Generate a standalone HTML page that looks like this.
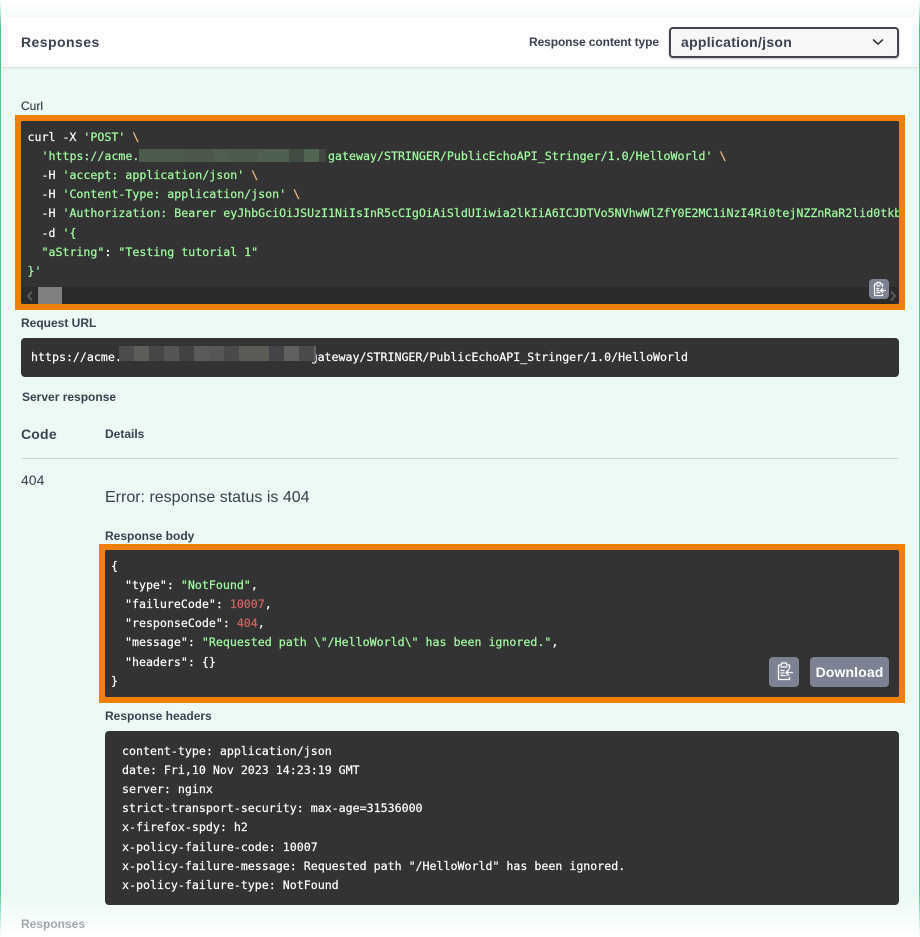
<!DOCTYPE html>
<html><head><meta charset="utf-8">
<style>
html,body{margin:0;padding:0}
body{width:920px;height:937px;overflow:hidden;position:relative;background:#ebfaf4;font-family:"Liberation Sans",sans-serif;color:#3b4151}
.a{position:absolute;white-space:pre}
.box{position:absolute;background:#333}
pre{position:absolute;margin:0;font:11.62px/19.2px "DejaVu Sans Mono",monospace;color:#fff;white-space:pre;font-weight:400;-webkit-text-stroke:.2px currentColor}
.s{color:#a2fca2}.b{color:#fcc28c}.n{color:#d36363}
.lab{font-size:12px;font-weight:700;line-height:14px}
.bl{position:absolute;height:100%;top:0}
.btn{position:absolute;background:#7d8293;border-radius:4px}
</style></head><body>
<div class="a" style="left:0;top:0;width:920px;height:17px;background:linear-gradient(#fff,#f5fcf9)"></div>
<div class="a" style="left:0;top:895px;width:920px;height:42px;background:linear-gradient(rgba(255,255,255,0),#fff)"></div>
<div class="a" style="left:0;top:0;width:1.3px;height:937px;background:linear-gradient(#fff 0,#49cc90 30px,#49cc90 890px,#fff 937px)"></div>
<div class="a" style="left:919px;top:0;width:1px;height:937px;background:linear-gradient(#fff 0,#49cc90 30px,#49cc90 890px,#fff 937px)"></div>
<div class="a" style="left:1px;top:17px;width:918px;height:50px;background:#fff;box-shadow:0 1px 2px rgba(0,0,0,.12)"></div>
<div class="a" style="left:21px;top:34px;font-size:14px;font-weight:700;line-height:16px;letter-spacing:.45px">Responses</div>
<div class="a lab" style="left:529px;top:35px;letter-spacing:-.1px">Response content type</div>
<div class="a" style="left:669px;top:27px;width:226px;height:27px;border:2px solid #41444e;border-radius:4px;background:#f7f7f7;box-shadow:0 1px 2px rgba(0,0,0,.25)"></div>
<div class="a" style="left:681px;top:34px;font-size:14px;font-weight:700;line-height:16px;letter-spacing:.28px">application/json</div>
<svg class="a" style="left:870px;top:36px" width="16" height="12" viewBox="0 0 16 12"><path d="M3 3.500 8 8l5-4.500" fill="none" stroke="#222" stroke-width="1.500"/></svg>

<div class="a lab" style="left:21px;top:99px;font-weight:400;text-shadow:0 0 .4px #3b4151">Curl</div>
<div class="a" style="left:15px;top:115px;width:890px;height:195px;background:#f08000"></div>
<div class="box" style="left:21px;top:121px;width:878px;height:183px;overflow:hidden;border-radius:2px">
<pre style="left:6.500px;top:6.600px">curl -X <span class="s">'POST'</span> <span class="b">\</span>
  <span class="s">'https://acme.                          'gateway/STRINGER/PublicEchoAPI_Stringer/1.0/HelloWorld'</span> <span class="b">\</span>
  -H <span class="s">'accept: application/json'</span> <span class="b">\</span>
  -H <span class="s">'Content-Type: application/json'</span> <span class="b">\</span>
  -H <span class="s">'Authorization: Bearer eyJhbGciOiJSUzI1NiIsInR5cCIgOiAiSldUIiwia2lkIiA6ICJDTVo5NVhwWlZfY0E2MC1iNzI4Ri0tejNZZnRaR2lid0tkb</span>
  -d <span class="s">'{</span>
  <span class="s">"aString"</span>: <span class="s">"Testing tutorial 1"</span>
<span class="s">}'</span></pre>
<div style="position:absolute;left:0;top:166px;width:878px;height:17px;background:#2b2b2b"></div>
<div style="position:absolute;left:17px;top:166px;width:24px;height:17px;background:#808080"></div>
<svg style="position:absolute;left:3px;top:169px" width="12" height="12" viewBox="0 0 12 12"><path d="M8 1.500 4 6l4 4.500" fill="none" stroke="#5a5a5a" stroke-width="2"/></svg>
<svg style="position:absolute;left:866px;top:169px" width="12" height="12" viewBox="0 0 12 12"><path d="M4 1.500 8 6l-4 4.500" fill="none" stroke="#5a5a5a" stroke-width="2"/></svg>
</div>
<div class="a" style="left:139px;top:149px;width:187px;height:13px;background:#4c5b4b">
<div class="bl" style="left:45px;width:45px;background:#4a574a"></div><div class="bl" style="left:75px;width:15px;background:#4f5e4e"></div><div class="bl" style="left:120px;width:30px;background:#4e604f"></div><div class="bl" style="left:150px;width:15px;background:#434c43"></div><div class="bl" style="left:165px;width:15px;background:#506552"></div><div class="bl" style="left:180px;width:7px;background:#404640"></div>
</div>
<div class="btn" style="left:869px;top:279px;width:20px;height:20px"><svg width="20" height="20" viewBox="0 0 20 20" style="display:block"><path d="M5.500 5h2.300V3.500h3.400V5h2.300v3M13.500 15v1.500h-8V5M7.500 6.800h4M7.300 9.500h3M7.300 11.500h3M7.300 13.500h4M17 11.500h-5.500M14 9l-2.500 2.500L14 14" fill="none" stroke="#fff" stroke-width="1.200"/></svg></div>

<div class="a lab" style="left:21px;top:316px">Request URL</div>
<div class="box" style="left:21px;top:338px;width:878px;height:39px;border-radius:4px">
<pre style="left:10px;top:9.500px">https://acme.                           gateway/STRINGER/PublicEchoAPI_Stringer/1.0/HelloWorld</pre>
</div>
<div class="a" style="left:119px;top:346px;width:197px;height:15px;background:#4b4d4f">
<div class="bl" style="left:15px;width:15px;background:#5e5d59"></div><div class="bl" style="left:30px;width:15px;background:#464646"></div><div class="bl" style="left:45px;width:15px;background:#555"></div><div class="bl" style="left:60px;width:15px;background:#424242"></div><div class="bl" style="left:75px;width:15px;background:#5b5a58"></div><div class="bl" style="left:90px;width:15px;background:#565656"></div><div class="bl" style="left:105px;width:15px;background:#48494b"></div><div class="bl" style="left:120px;width:30px;background:#5c5b55"></div><div class="bl" style="left:150px;width:15px;background:#444548"></div><div class="bl" style="left:165px;width:15px;background:#5f605f"></div><div class="bl" style="left:180px;width:15px;background:#4b4b4b"></div><div class="bl" style="left:195px;width:2px;background:#60636b"></div>
</div>
<div class="a lab" style="left:22px;top:390px">Server response</div>
<div class="a" style="left:21px;top:426px;font-size:14px;font-weight:700;line-height:16px;letter-spacing:.2px">Code</div>
<div class="a lab" style="left:105px;top:427px">Details</div>
<div class="a" style="left:21px;top:458px;width:878px;height:1px;background:#c9d4cf"></div>
<div class="a" style="left:21px;top:472px;font-size:14px;line-height:16px">404</div>
<div class="a" style="left:105px;top:488px;font-size:16px;line-height:19px">Error: response status is 404</div>
<div class="a lab" style="left:105px;top:529px">Response body</div>
<div class="a" style="left:99px;top:544px;width:806px;height:159px;background:#f08000"></div>
<div class="box" style="left:105px;top:550px;width:794px;height:147px;border-radius:2px">
<pre style="left:6px;top:6.600px">{
  "type": <span class="s">"NotFound"</span>,
  "failureCode": <span class="n">10007</span>,
  "responseCode": <span class="n">404</span>,
  "message": <span class="s">"Requested path \"/HelloWorld\" has been ignored."</span>,
  "headers": {}
}</pre>
</div>
<div class="btn" style="left:769px;top:657px;width:30px;height:30px"><svg width="30" height="30" viewBox="0 0 30 30" style="display:block"><path d="M9.500 8h3V6h5v2h3v4M20.500 20v2.500h-11V8M11.500 10h7M11.500 13.500h4M11.500 16h4M11.500 18.500h6M24 15.500h-7M20 12.500l-3 3 3 3" fill="none" stroke="#fff" stroke-width="1.300"/></svg></div>
<div class="btn" style="left:810px;top:657px;width:79px;height:30px;color:#fff;font-size:14px;font-weight:700;line-height:30px;text-align:center;letter-spacing:.12px">Download</div>
<div class="a lab" style="left:105px;top:709px">Response headers</div>
<div class="box" style="left:105px;top:731px;width:794px;height:174px;border-radius:4px">
<pre style="left:17px;top:10.500px">content-type: application/json
date: Fri,10 Nov 2023 14:23:19 GMT
server: nginx
strict-transport-security: max-age=31536000
x-firefox-spdy: h2
x-policy-failure-code: 10007
x-policy-failure-message: Requested path "/HelloWorld" has been ignored.
x-policy-failure-type: NotFound</pre>
</div>
<div class="a lab" style="left:21px;top:917px;color:#3b4151;opacity:.45">Responses</div>
</body></html>
